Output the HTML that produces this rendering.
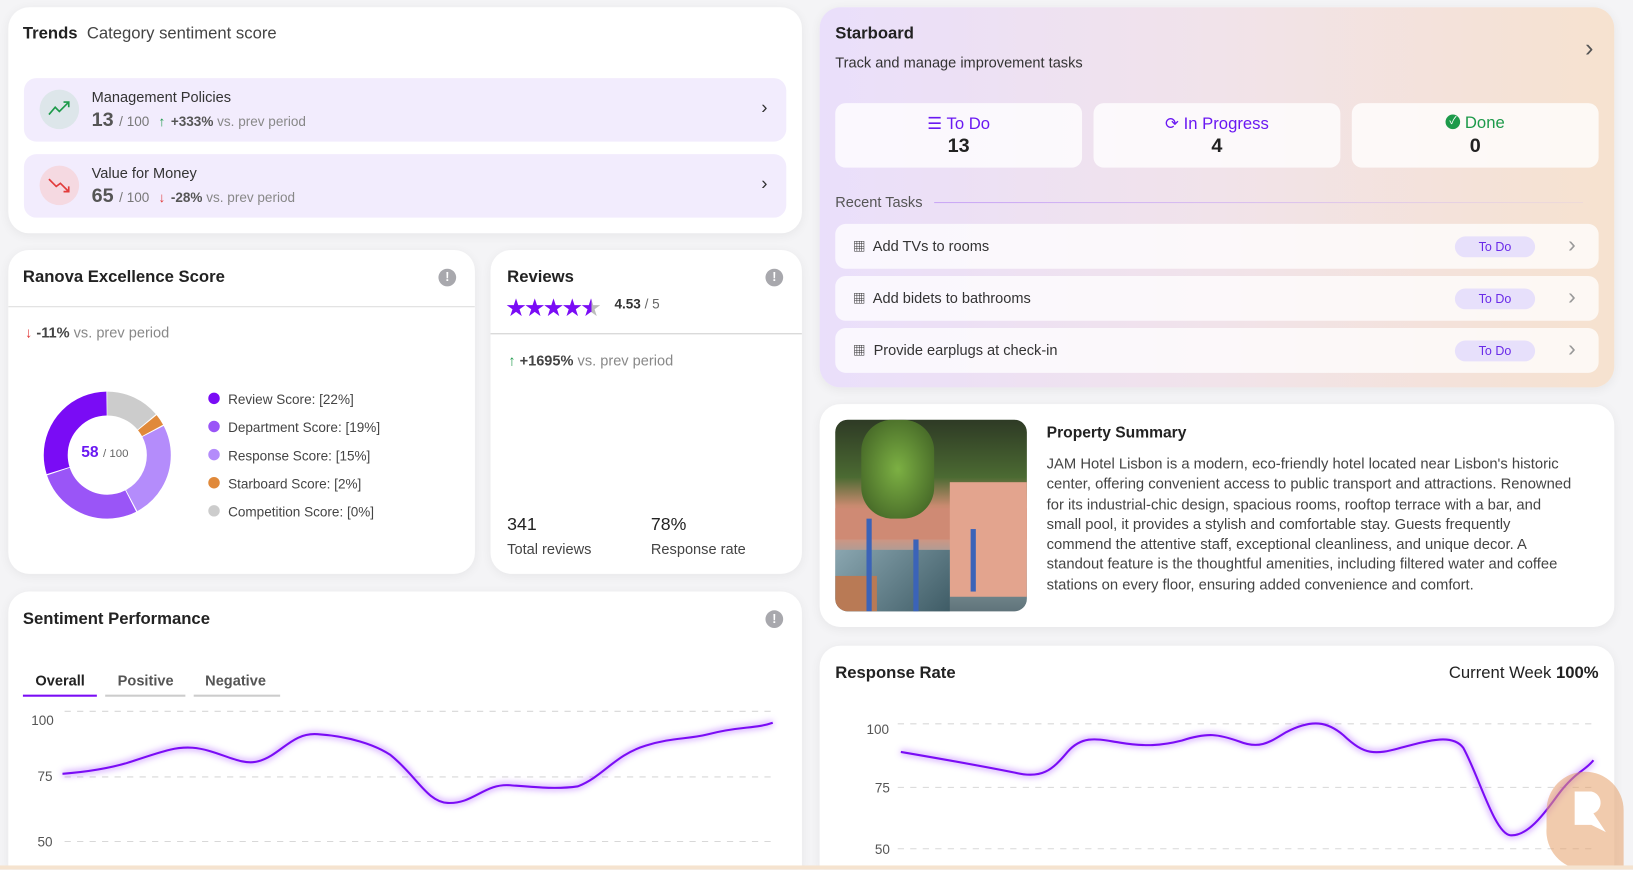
<!DOCTYPE html>
<html><head><meta charset="utf-8"><style>
*{box-sizing:border-box;margin:0;padding:0}
html,body{width:1633px;height:870px;overflow:hidden;background:#f4f4f6;font-family:"Liberation Sans","Noto Sans CJK JP",sans-serif;color:#222}
#s{position:absolute;left:0;top:0;width:1568px;height:835px;transform:scale(1.04145);transform-origin:0 0;overflow:hidden}
.card{position:absolute;background:#fff;border-radius:20px;box-shadow:0 2px 10px rgba(0,0,0,.06);overflow:hidden}
.t{position:absolute;white-space:nowrap}
.b{font-weight:bold}
.row{position:absolute;left:15px;right:15px;height:61px;background:#f2ecfd;border-radius:12px}
.ic{position:absolute;width:38px;height:38px;border-radius:50%;left:15px;top:11px}
.chev{position:absolute;font-size:18px;color:#333}
.info{position:absolute;width:17px;height:17px;border-radius:50%;background:#a8a8ad;color:#fff;font-size:12px;font-weight:bold;text-align:center;line-height:17px}
.g{color:#888}
.box{position:absolute;top:92px;height:62px;width:237px;background:rgba(255,255,255,.78);border-radius:10px;text-align:center}
.task{position:absolute;left:15px;right:15px;height:43px;background:rgba(255,255,255,.75);border-radius:10px}
.pill{position:absolute;right:61px;top:12px;width:77px;height:20px;border-radius:10px;background:#e7e0fb;color:#6a2be8;font-size:12px;text-align:center;line-height:20px}
</style></head><body><div id="s">

<!-- Trends -->
<div class="card" style="left:8px;top:7px;width:762px;height:217px">
<div class="t" style="left:14px;top:17px;font-size:16px"><b>Trends</b> <span style="color:#444">&nbsp;Category sentiment score</span></div>
<div class="row" style="top:68px">
 <div class="ic" style="background:#dde6ea"><svg width="38" height="38"><path d="M9 24 L15 17 L19 21 L28 12 M23 12 H28 V17" stroke="#1d9a4a" stroke-width="1.6" fill="none"/></svg></div>
 <div class="t" style="left:65px;top:10px;font-size:14px;color:#333">Management Policies</div>
 <div class="t" style="left:65px;top:30px;font-size:19px;color:#555"><b>13</b> <span style="font-size:13px;color:#777">/ 100</span> <span style="font-size:13px;color:#1d9a4a">&nbsp;&#8593;</span> <span style="font-size:13px;color:#555"><b>+333%</b> <span class="g">vs. prev period</span></span></div>
 <div class="chev" style="right:18px;top:18px">&#8250;</div>
</div>
<div class="row" style="top:141px">
 <div class="ic" style="background:#f5d9e1"><svg width="38" height="38"><path d="M9 13 L16 20 L20 17 L28 25 M23 25 H28 V20" stroke="#e23c3c" stroke-width="1.6" fill="none"/></svg></div>
 <div class="t" style="left:65px;top:10px;font-size:14px;color:#333">Value for Money</div>
 <div class="t" style="left:65px;top:30px;font-size:19px;color:#555"><b>65</b> <span style="font-size:13px;color:#777">/ 100</span> <span style="font-size:13px;color:#e23c3c">&nbsp;&#8595;</span> <span style="font-size:13px;color:#555"><b>-28%</b> <span class="g">vs. prev period</span></span></div>
 <div class="chev" style="right:18px;top:18px">&#8250;</div>
</div>
</div>

<!-- Starboard -->
<div class="card" style="left:787px;top:7px;width:763px;height:365px;background:linear-gradient(90deg,#eadffb 0%,#f1e3ea 50%,#f6e2cf 100%)">
<div class="t b" style="left:15px;top:17px;font-size:16px">Starboard</div>
<div class="t" style="left:15px;top:45px;font-size:14px;color:#333">Track and manage improvement tasks</div>
<div class="chev" style="right:20px;top:26px;font-size:24px;color:#555">&#8250;</div>
<div class="box" style="left:15px"><div style="margin-top:10px;font-size:16px;color:#6a18f2">&#9776; To Do</div><div class="b" style="font-size:19px;margin-top:1px">13</div></div>
<div class="box" style="left:263px"><div style="margin-top:10px;font-size:16px;color:#6a18f2">&#10227; In Progress</div><div class="b" style="font-size:19px;margin-top:1px">4</div></div>
<div class="box" style="left:511px"><div style="margin-top:10px;font-size:16px;color:#1d9a4a;height:19px;line-height:19px"><span style="display:inline-block;width:14px;height:14px;border-radius:50%;background:#1d9a4a;color:#fff;font-size:10px;line-height:14px;vertical-align:middle;margin-top:-3px">&#10003;</span> Done</div><div class="b" style="font-size:19px;margin-top:2px">0</div></div>
<div class="t" style="left:15px;top:179px;font-size:14px;color:#555">Recent Tasks</div>
<div style="position:absolute;left:110px;right:30px;top:187px;height:1px;background:linear-gradient(90deg,#c9a6f5,rgba(220,200,230,.3))"></div>
<div class="task" style="top:208px"><div class="t" style="left:17px;top:13px;font-size:14px;color:#333"><b style="font-size:12px">&#9638;</b>&nbsp; Add TVs to rooms</div><div class="pill">To Do</div><div class="chev" style="right:22px;top:7px;color:#999;font-size:22px">&#8250;</div></div>
<div class="task" style="top:258px"><div class="t" style="left:17px;top:13px;font-size:14px;color:#333"><b style="font-size:12px">&#9638;</b>&nbsp; Add bidets to bathrooms</div><div class="pill">To Do</div><div class="chev" style="right:22px;top:7px;color:#999;font-size:22px">&#8250;</div></div>
<div class="task" style="top:308px"><div class="t" style="left:17px;top:13px;font-size:14px;color:#333"><b style="font-size:12px">&#9638;</b>&nbsp; Provide earplugs at check-in</div><div class="pill">To Do</div><div class="chev" style="right:22px;top:7px;color:#999;font-size:22px">&#8250;</div></div>
</div>

<!-- Ranova -->
<div class="card" style="left:8px;top:240px;width:448px;height:311px">
<div class="t b" style="left:14px;top:18px;font-size:16px">Ranova Excellence Score</div>
<div class="info" style="left:413px;top:18px">!</div>
<div style="position:absolute;left:0;right:0;top:54px;height:1px;background:#ddd"></div>
<div class="t" style="left:16px;top:71px;font-size:14px"><span style="color:#e23c3c">&#8595;</span> <b style="color:#444">-11%</b> <span class="g">vs. prev period</span></div>
<svg style="position:absolute;left:33px;top:135px" width="124" height="124" viewBox="0 0 124 124">
<g transform="rotate(-90 62 62)" fill="none" stroke-width="23">
<circle cx="62" cy="62" r="49.5" stroke="#cccccc" stroke-dasharray="43 268" stroke-dashoffset="0"/>
<circle cx="62" cy="62" r="49.5" stroke="#e0893a" stroke-dasharray="9 302" stroke-dashoffset="-44"/>
<circle cx="62" cy="62" r="49.5" stroke="#b48cfb" stroke-dasharray="77 234" stroke-dashoffset="-54"/>
<circle cx="62" cy="62" r="49.5" stroke="#9a55f7" stroke-dasharray="85 226" stroke-dashoffset="-132"/>
<circle cx="62" cy="62" r="49.5" stroke="#7a0cf5" stroke-dasharray="92 219" stroke-dashoffset="-218"/>
</g></svg>
<div class="t" style="left:70px;top:186px;font-size:15px;color:#6a18f2"><b>58</b> <span style="font-size:11px;color:#666">/ 100</span></div>
<div style="position:absolute;left:192px;top:130px;font-size:13px;color:#444;line-height:27px">
<div><span style="display:inline-block;width:11px;height:11px;border-radius:50%;background:#7a0cf5;margin-right:8px"></span>Review Score: [22%]</div>
<div><span style="display:inline-block;width:11px;height:11px;border-radius:50%;background:#9a55f7;margin-right:8px"></span>Department Score: [19%]</div>
<div><span style="display:inline-block;width:11px;height:11px;border-radius:50%;background:#b48cfb;margin-right:8px"></span>Response Score: [15%]</div>
<div><span style="display:inline-block;width:11px;height:11px;border-radius:50%;background:#e0893a;margin-right:8px"></span>Starboard Score: [2%]</div>
<div><span style="display:inline-block;width:11px;height:11px;border-radius:50%;background:#cccccc;margin-right:8px"></span>Competition Score: [0%]</div>
</div>
</div>

<!-- Reviews -->
<div class="card" style="left:471px;top:240px;width:299px;height:311px">
<div class="t b" style="left:16px;top:18px;font-size:16px">Reviews</div>
<div class="info" style="left:264px;top:18px">!</div>
<div class="t" style="left:15px;top:41px;font-size:19px;color:#7a0cf5;letter-spacing:-1px">&#9733;&#9733;&#9733;&#9733;<span style="background:linear-gradient(90deg,#7a0cf5 55%,#bbb 55%);-webkit-background-clip:text;color:transparent">&#9733;</span></div>
<div class="t" style="left:119px;top:44px;font-size:13px"><b style="color:#333">4.53</b> <span style="color:#666">/ 5</span></div>
<div style="position:absolute;left:0;right:0;top:80px;height:1px;background:#ccc"></div>
<div class="t" style="left:17px;top:98px;font-size:14px"><span style="color:#1d9a4a">&#8593;</span> <b style="color:#444">+1695%</b> <span class="g">vs. prev period</span></div>
<div class="t" style="left:16px;top:254px;font-size:17px;color:#222">341</div>
<div class="t" style="left:16px;top:279px;font-size:14px;color:#444">Total reviews</div>
<div class="t" style="left:154px;top:254px;font-size:17px;color:#222">78%</div>
<div class="t" style="left:154px;top:279px;font-size:14px;color:#444">Response rate</div>
</div>

<!-- Sentiment -->
<div class="card" style="left:8px;top:568px;width:762px;height:267px;border-radius:20px 20px 0 0">
<div class="t b" style="left:14px;top:18px;font-size:16px">Sentiment Performance</div>
<div class="info" style="left:727px;top:18px">!</div>
<div class="t b" style="left:26px;top:77px;font-size:14px;color:#222">Overall</div>
<div style="position:absolute;left:14px;top:99px;width:71px;height:2px;background:#7a0cf5"></div>
<div class="t b" style="left:105px;top:77px;font-size:14px;color:#555">Positive</div>
<div style="position:absolute;left:93px;top:99px;width:77px;height:2px;background:#ccc"></div>
<div class="t b" style="left:189px;top:77px;font-size:14px;color:#555">Negative</div>
<div style="position:absolute;left:178px;top:99px;width:83px;height:2px;background:#ccc"></div>
</div>

<!-- Property -->
<div class="card" style="left:787px;top:388px;width:763px;height:214px">
<div style="position:absolute;left:15px;top:15px;width:184px;height:184px;border-radius:12px;overflow:hidden;background:linear-gradient(180deg,#2e3a25 0%,#4b6a32 30%,#c98a70 45%,#d9937c 60%,#8fa3a8 75%,#5f737a 100%)">
<div style="position:absolute;left:0;top:85px;width:184px;height:30px;background:#cf8a74"></div>
<div style="position:absolute;left:110px;top:60px;width:74px;height:110px;background:#e3a48e"></div>
<div style="position:absolute;left:25px;top:0;width:70px;height:95px;border-radius:30px;background:radial-gradient(#7cb043,#3b5a22)"></div>
<div style="position:absolute;left:0;top:125px;width:110px;height:59px;background:linear-gradient(135deg,#8aa6b0,#3f5c66)"></div>
<div style="position:absolute;left:0;top:150px;width:40px;height:34px;background:#b97a55"></div>
<div style="position:absolute;left:30px;top:95px;width:5px;height:89px;background:#3b63b8"></div>
<div style="position:absolute;left:75px;top:115px;width:5px;height:69px;background:#3b63b8"></div>
<div style="position:absolute;left:130px;top:105px;width:5px;height:60px;background:#3b63b8"></div>
</div>
<div class="t b" style="left:218px;top:19px;font-size:15px">Property Summary</div>
<div style="position:absolute;left:218px;top:49px;width:540px;font-size:14.2px;line-height:19.3px;color:#444;white-space:nowrap">JAM Hotel Lisbon is a modern, eco-friendly hotel located near Lisbon's historic<br>center, offering convenient access to public transport and attractions. Renowned<br>for its industrial-chic design, spacious rooms, rooftop terrace with a bar, and<br>small pool, it provides a stylish and comfortable stay. Guests frequently<br>commend the attentive staff, exceptional cleanliness, and unique decor. A<br>standout feature is the thoughtful amenities, including filtered water and coffee<br>stations on every floor, ensuring added convenience and comfort.</div>
</div>

<!-- Response Rate -->
<div class="card" style="left:787px;top:620px;width:763px;height:215px;border-radius:20px 20px 0 0">
<div class="t b" style="left:15px;top:18px;font-size:16px">Response Rate</div>
<div class="t" style="right:15px;top:18px;font-size:16px">Current Week <b>100%</b></div>
</div>

<svg style="position:absolute;left:0;top:0" width="1568" height="835">
<defs><filter id="gl" x="-10%" y="-50%" width="120%" height="200%"><feGaussianBlur stdDeviation="3"/></filter></defs>
<g font-size="13" fill="#555" font-family="Liberation Sans, sans-serif">
<text x="30" y="696">100</text><text x="36" y="750">75</text><text x="36" y="813">50</text>
<text x="832" y="705">100</text><text x="840" y="761">75</text><text x="840" y="820">50</text></g>
<g stroke="#d8d8d8" stroke-dasharray="6 6" stroke-width="1">
<line x1="62" y1="683" x2="742" y2="683"/><line x1="62" y1="746" x2="742" y2="746"/><line x1="62" y1="808" x2="742" y2="808"/>
<line x1="862" y1="695" x2="1530" y2="695"/><line x1="862" y1="756" x2="1530" y2="756"/><line x1="862" y1="815" x2="1530" y2="815"/></g>
<path d="M60 743 C85 741,110 737,130 730 C160 720,170 717,185 718 C210 720,230 736,248 731 C270 725,280 703,305 705 C335 707,360 715,375 725 C400 745,410 770,430 771 C455 772,465 752,490 754 C515 756,535 758,555 755 C580 745,590 725,620 716 C645 708,660 710,680 705 C710 697,725 700,742 694" fill="none" stroke="#a855ff" stroke-width="5" opacity=".5" filter="url(#gl)"/>
<path d="M60 743 C85 741,110 737,130 730 C160 720,170 717,185 718 C210 720,230 736,248 731 C270 725,280 703,305 705 C335 707,360 715,375 725 C400 745,410 770,430 771 C455 772,465 752,490 754 C515 756,535 758,555 755 C580 745,590 725,620 716 C645 708,660 710,680 705 C710 697,725 700,742 694" fill="none" stroke="#7a0cf5" stroke-width="2"/>
<path d="M865 722 C900 728,940 735,975 742 C1000 748,1010 740,1025 722 C1040 705,1055 710,1075 713 C1100 717,1115 716,1135 711 C1160 703,1170 705,1190 712 C1210 720,1220 712,1235 703 C1260 690,1275 693,1290 706 C1310 725,1320 725,1345 718 C1375 710,1395 705,1405 718 C1420 745,1435 800,1450 802 C1470 804,1490 770,1500 758 C1515 740,1522 740,1530 730" fill="none" stroke="#a855ff" stroke-width="5" opacity=".5" filter="url(#gl)"/>
<path d="M865 722 C900 728,940 735,975 742 C1000 748,1010 740,1025 722 C1040 705,1055 710,1075 713 C1100 717,1115 716,1135 711 C1160 703,1170 705,1190 712 C1210 720,1220 712,1235 703 C1260 690,1275 693,1290 706 C1310 725,1320 725,1345 718 C1375 710,1395 705,1405 718 C1420 745,1435 800,1450 802 C1470 804,1490 770,1500 758 C1515 740,1522 740,1530 730" fill="none" stroke="#7a0cf5" stroke-width="2"/>
<g opacity=".55"><path d="M1485 778 a37 37 0 0 1 74 0 V835 H1520 a37 37 0 0 1 -35 -40 Z" fill="#e6a06a"/>
<path d="M1512 760 h16 a11 11 0 0 1 2 21 l12 18 l-14 -7 h-16 Z" fill="#fff"/></g>
</svg>
<div style="position:absolute;left:0;top:831px;width:1568px;height:4px;background:#f5e3cf"></div>
</div></body></html>
